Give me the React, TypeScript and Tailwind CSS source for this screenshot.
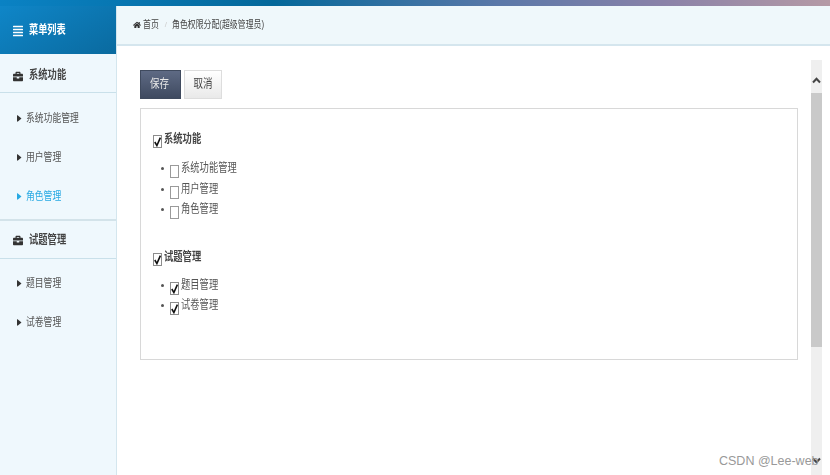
import { FaAlignJustify, FaBriefcase, FaCaretRight, FaHome } from "react-icons/fa";

const font = "[font-family:'Liberation_Sans','Noto_Sans_CJK_SC',sans-serif]";

function Tall({ children, className = "" }: { children: React.ReactNode; className?: string }) {
  return <span className={`inline-block scale-y-[1.3] ${className}`}>{children}</span>;
}

function Check({ on }: { on: boolean }) {
  return (
    <svg width="9" height="13" viewBox="0 0 9 13" className="shrink-0">
      <rect x="0.5" y="0.5" width="8" height="12" fill="#fff" stroke={on ? "#8c8c8c" : "#9a9a9a"} />
      {on && <path d="M1.8 7 L3.9 10.6 L7.4 2.6" fill="none" stroke="#111" strokeWidth="1.6" />}
    </svg>
  );
}

function Chevron({ down = false }: { down?: boolean }) {
  return (
    <svg width="9" height="7" viewBox="0 0 9 7">
      <path d={down ? "M1 1.5 L4.5 5.2 L8 1.5" : "M1 5.5 L4.5 1.8 L8 5.5"} fill="none" stroke="#444" strokeWidth="2" />
    </svg>
  );
}

function NavItem({ label, active = false }: { label: string; active?: boolean }) {
  return (
    <div className={`h-[39px] flex items-center pl-[17px] gap-[4px] text-[8.8px] ${active ? "text-[#27a9e3]" : "text-[#555]"}`}>
      <FaCaretRight className={`w-[5px] h-[11px] ${active ? "text-[#27a9e3]" : "text-[#333]"}`} preserveAspectRatio="none" />
      <Tall>{label}</Tall>
    </div>
  );
}

function NavHead({ label, className = "" }: { label: string; className?: string }) {
  return (
    <div className={`flex items-center pl-[13px] gap-[6px] text-[9.3px] font-bold text-[#444] border-b border-[#c9e0ea] ${className}`}>
      <FaBriefcase className="w-[10px] h-[11px] text-[#333]" preserveAspectRatio="none" />
      <Tall>{label}</Tall>
    </div>
  );
}

function Group({ label, items, on, className = "", listClass = "" }: { label: string; items: string[]; on: boolean; className?: string; listClass?: string }) {
  return (
    <div className={className}>
      <div className="flex items-start gap-[2px] text-[9.3px] font-bold text-[#444] h-[14px]">
        <span className="pt-[4px]"><Check on={on} /></span>
        <Tall className="mt-[2px]">{label}</Tall>
      </div>
      <ul className={`flex flex-col ${listClass}`}>
        {items.map((t) => (
          <li key={t} className="h-[20.5px] flex items-start text-[9.3px] text-[#555]">
            <span className="w-[3px] h-[3px] rounded-full bg-[#555] mt-[5px] ml-[8px] mr-[6px]" />
            <span className="pt-[3px] mr-[2px]"><Check on={on && items.length === 2} /></span>
            <Tall>{t}</Tall>
          </li>
        ))}
      </ul>
    </div>
  );
}

export default function App() {
  return (
    <div className={`w-[830px] h-[475px] overflow-hidden bg-white relative ${font}`}>
      <div className="w-full h-full flex flex-col blur-[0.35px]">
        <div className="h-[6px] shrink-0 bg-[linear-gradient(90deg,#0a82c4_0%,#04689a_33%,#5a78a8_60%,#8a82a8_80%,#b59aa5_100%)]" />
        <div className="flex flex-1 min-h-0">
          <aside className="w-[117px] shrink-0 bg-[#eff8fd] border-r border-[#d4e6ee]">
            <div className="h-[48px] flex items-center pl-[13px] pt-[2px] gap-[6px] text-white font-bold text-[9.2px] bg-[linear-gradient(150deg,#0f86c8,#0a6a9f)]">
              <FaAlignJustify className="w-[10px] h-[12px]" preserveAspectRatio="none" />
              <Tall>菜单列表</Tall>
            </div>
            <NavHead label="系统功能" className="h-[39px] pt-[6px]" />
            <div className="pt-[6px] pb-[3px] border-b-2 border-[#d3e3ea]">
              <NavItem label="系统功能管理" />
              <NavItem label="用户管理" />
              <NavItem label="角色管理" active />
            </div>
            <NavHead label="试题管理" className="h-[38px] pt-[2px]" />
            <div className="pt-[5px]">
              <NavItem label="题目管理" />
              <NavItem label="试卷管理" />
            </div>
          </aside>
          <main className="flex-1 min-w-0 flex flex-col">
            <div className="h-[40px] shrink-0 bg-[#eff8fb] border-b-2 border-[#d5e6ee] flex items-center pl-[16px] text-[7.9px] text-[#444]">
              <FaHome className="w-[8px] h-[8px] mr-[2px] text-[#333]" />
              <Tall>首页</Tall>
              <span className="ml-[6px] mr-[5px] text-[#ccc]">/</span>
              <Tall>角色权限分配(超级管理员)</Tall>
            </div>
            <div className="flex-1 min-h-0 flex pl-[23px] pr-[8px]">
              <div className="flex-1 min-w-0 pt-[24px] pr-[13px]">
                <div className="flex gap-[3px] text-[9.5px]">
                  <button className="w-[41px] h-[29px] pr-[2px] text-[#e8e8e8] border border-[#3f4a5e] bg-[linear-gradient(180deg,#5e6a84,#3f4a60)]"><Tall>保存</Tall></button>
                  <button className="w-[38px] h-[29px] text-[#444] border border-[#ddd] bg-[linear-gradient(180deg,#fff,#e9e9e9)]"><Tall>取消</Tall></button>
                </div>
                <div className="mt-[9px] h-[252px] border border-[#d8d8d8] pl-[12px] pt-[22px]">
                  <Group label="系统功能" items={["系统功能管理", "用户管理", "角色管理"]} on listClass="mt-[17px]" />
                  <Group label="试题管理" items={["题目管理", "试卷管理"]} on className="mt-[25px]" listClass="mt-[16px]" />
                </div>
              </div>
              <div className="w-[11px] shrink-0 mt-[14px] bg-[#efefef] flex flex-col items-center">
                <div className="h-[33px] flex items-end justify-center pb-[9px]"><Chevron /></div>
                <div className="w-full h-[254px] bg-[#c9c9c9]" />
                <div className="flex-1 flex items-end justify-center pb-[11px]"><Chevron down /></div>
              </div>
            </div>
          </main>
        </div>
      </div>
      <div className="absolute left-[719px] top-[452px] text-[12.5px] text-[#999] whitespace-nowrap">CSDN @Lee-web</div>
    </div>
  );
}
